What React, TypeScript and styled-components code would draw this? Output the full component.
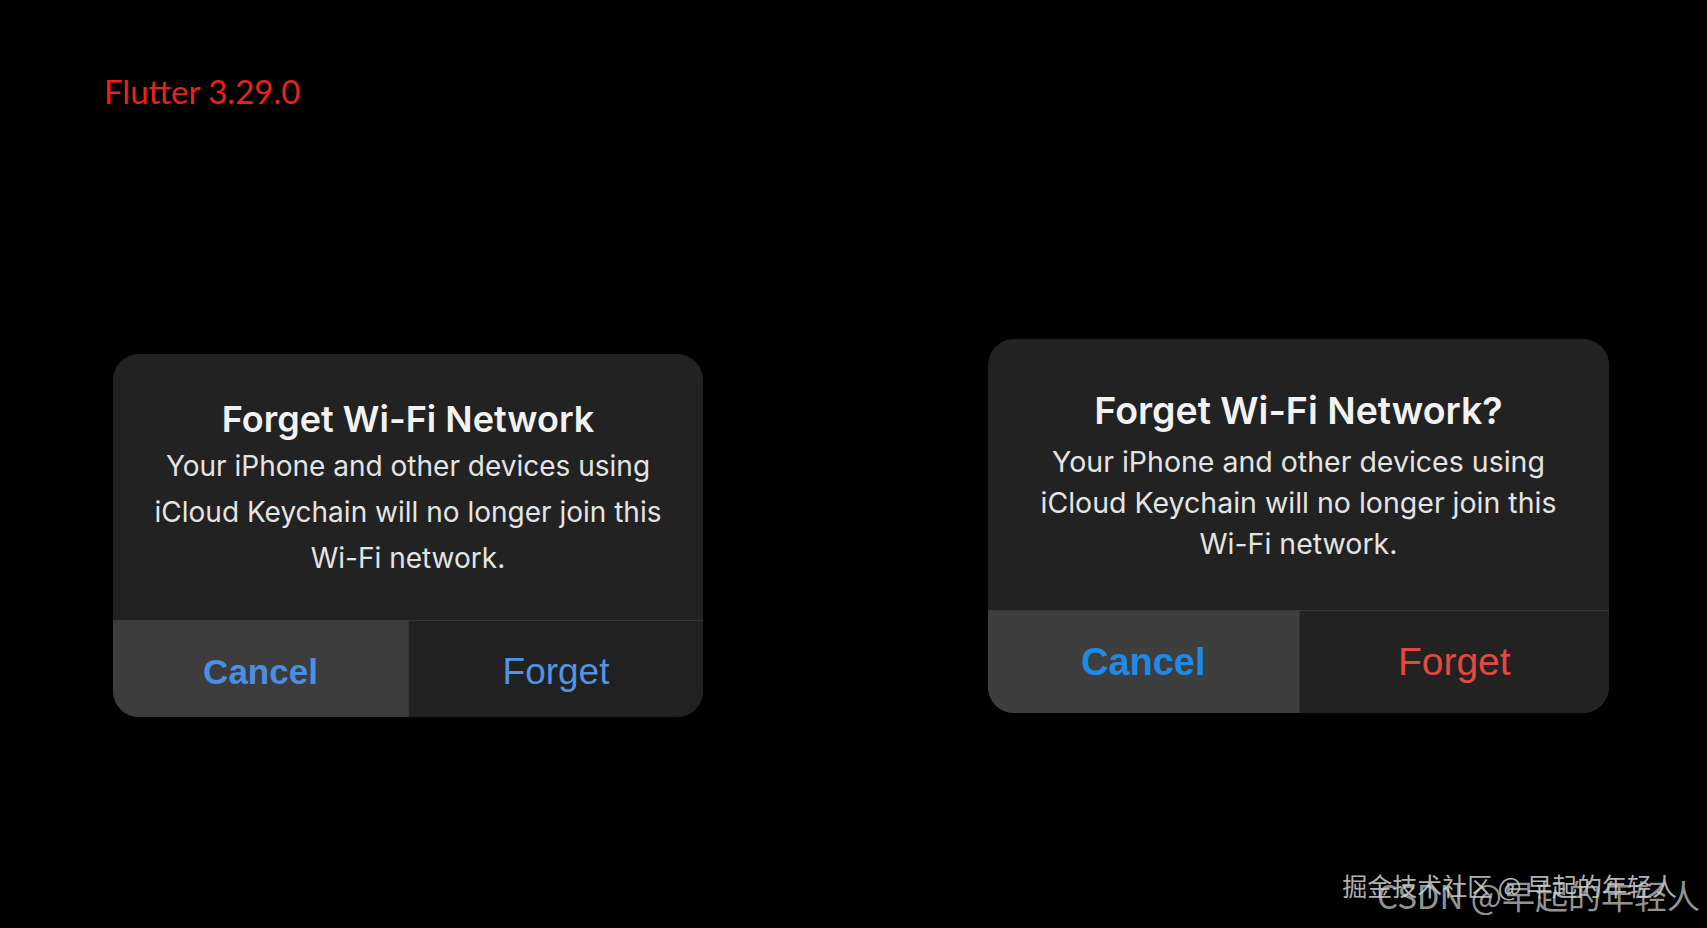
import React from "react";
import styled, { createGlobalStyle } from "styled-components";

const Global = createGlobalStyle`
  html, body { margin: 0; padding: 0; background: #000; }
  body { font-family: "Inter", "Liberation Sans", sans-serif; }
`;

const Page = styled.div`
  position: relative;
  width: 1707px;
  height: 928px;
  background: #000;
  overflow: hidden;
`;

const VersionLabel = styled.div`
  padding: 71px 0 0 104px;
  height: 40px;
  font-family: "Lato", "Open Sans", sans-serif;
  font-size: 33px;
  line-height: 40px;
  color: #e8231f;
`;

const Row = styled.div`
  display: flex;
  align-items: flex-start;
`;

const Dialog = styled.div<{ $w: number; $top: number; $left: number }>`
  width: ${(p) => p.$w}px;
  margin-top: ${(p) => p.$top}px;
  margin-left: ${(p) => p.$left}px;
  background: #222222;
  border-radius: 26px;
  overflow: hidden;
  display: flex;
  flex-direction: column;
`;

const Content = styled.div<{ $pt: number; $pb: number }>`
  padding: ${(p) => p.$pt}px 10px ${(p) => p.$pb}px;
  display: flex;
  flex-direction: column;
  align-items: center;
  text-align: center;
`;

const Title = styled.div<{ $size: number; $gap: number }>`
  font-size: ${(p) => p.$size}px;
  line-height: 40px;
  font-weight: 600;
  color: #f2f2f2;
  margin-bottom: ${(p) => p.$gap}px;
`;

const Body = styled.div<{ $size: number; $lh: number }>`
  font-size: ${(p) => p.$size}px;
  line-height: ${(p) => p.$lh}px;
  color: #e4e4e4;
  font-weight: 400;
`;

const Buttons = styled.div<{ $h: number; $shift: number }>`
  display: grid;
  grid-template-columns: 1fr 1fr;
  height: ${(p) => p.$h}px;
  border-top: 1px solid #383838;
  & > button {
    padding-top: ${(p) => p.$shift}px;
  }
`;

const ActionButton = styled.button<{ $bg: string; $color: string; $bold?: boolean; $size: number }>`
  border: none;
  margin: 0;
  padding: 0;
  background: ${(p) => p.$bg};
  color: ${(p) => p.$color};
  font-family: "Liberation Sans", Arial, sans-serif;
  font-size: ${(p) => p.$size}px;
  font-weight: ${(p) => (p.$bold ? 700 : 400)};
  display: flex;
  align-items: center;
  justify-content: center;
  & + & {
    border-left: 1px solid #343434;
  }
`;

const Watermark = styled.div<{ $right: number; $bottom: number; $size: number; $opacity: number }>`
  position: absolute;
  right: ${(p) => p.$right}px;
  bottom: ${(p) => p.$bottom}px;
  font-family: "Noto Sans CJK SC", "Noto Sans", sans-serif;
  font-size: ${(p) => p.$size}px;
  color: #d0d0d0;
  opacity: ${(p) => p.$opacity};
  white-space: nowrap;
  line-height: 1;
`;

const body = (
  <>
    Your iPhone and other devices using
    <br />
    iCloud Keychain will no longer join this
    <br />
    Wi-Fi network.
  </>
);

export default function App() {
  return (
    <Page>
      <Global />
      <VersionLabel>Flutter 3.29.0</VersionLabel>
      <Row>
        <Dialog $w={590} $top={243} $left={113}>
          <Content $pt={45} $pb={39}>
            <Title $size={36} $gap={4}>Forget Wi-Fi Network</Title>
            <Body $size={28} $lh={46}>{body}</Body>
          </Content>
          <Buttons $h={96} $shift={6}>
            <ActionButton $bg="#3c3c3c" $color="#4a8fe2" $bold $size={35}>
              Cancel
            </ActionButton>
            <ActionButton $bg="#212121" $color="#5193e4" $size={37}>
              Forget
            </ActionButton>
          </Buttons>
        </Dialog>
        <Dialog $w={621} $top={228} $left={285}>
          <Content $pt={52} $pb={46}>
            <Title $size={37.5} $gap={10}>Forget Wi-Fi Network?</Title>
            <Body $size={28.5} $lh={41}>{body}</Body>
          </Content>
          <Buttons $h={102} $shift={0}>
            <ActionButton $bg="#3e3e3e" $color="#1f8ae8" $bold $size={38}>
              Cancel
            </ActionButton>
            <ActionButton $bg="#222222" $color="#e5483f" $size={39}>
              Forget
            </ActionButton>
          </Buttons>
        </Dialog>
      </Row>
      <Watermark $right={30} $bottom={30} $size={25} $opacity={0.85}>
        掘金技术社区 @ 早起的年轻人
      </Watermark>
      <Watermark $right={7} $bottom={16} $size={33} $opacity={0.7}>
        CSDN @早起的年轻人
      </Watermark>
    </Page>
  );
}
